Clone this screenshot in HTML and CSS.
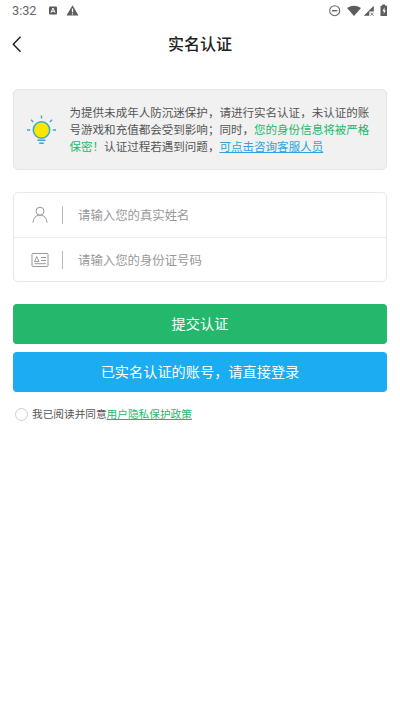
FILE: index.html
```
<!DOCTYPE html>
<html lang="zh-CN">
<head>
<meta charset="utf-8">
<meta name="viewport" content="width=device-width, initial-scale=1">
<title>实名认证</title>
<link rel="stylesheet" href="styles.css">
</head>
<body>
<header>
  <div class="status">
    <span class="time">3:32</span>
    <svg class="status-left" width="32" height="12" viewBox="0 0 32 12">
      <rect x="2" y="1.500" width="8" height="8" rx="1" fill="#5c5c5c"/>
      <path d="M4 7.700 6 3l2 4.700M4.700 6.300h2.600" fill="none" stroke="#fff" stroke-width="1"/>
      <path d="M25.500.3 31.500 10.500h-12z" fill="#5c5c5c"/>
      <path d="M25.500 3.500v3.700M25.500 8.200v1.300" stroke="#fff" stroke-width="1.200"/>
    </svg>
    <svg class="status-right" width="60" height="14" viewBox="0 0 60 14">
      <circle cx="5.700" cy="6.700" r="5" fill="none" stroke="#666" stroke-width="1.100"/>
      <path d="M3 6.700h5.400" stroke="#666" stroke-width="1.400"/>
      <path d="M18 4Q25 -.4 32 4L25 12z" fill="#5c5c5c"/>
      <path d="M44.800 1.800v5.700h-4.500v4.200h-5.500z" fill="#5c5c5c"/>
      <path d="m41.500 8.700 3 3m0-3-3 3" stroke="#777" stroke-width="1"/>
      <path d="M53.200.5h3v1.200H58V12h-6.500V1.700h1.700z" fill="#5c5c5c"/>
      <path d="m55.500 3.300-2 3.900h1.300v2.900l2-3.900h-1.300z" fill="#fff"/>
    </svg>
  </div>
  <div class="nav">
    <svg class="back" width="10" height="18" viewBox="0 0 10 18"><path d="M8.500 1.800 1.300 9.300l7.200 7.500" fill="none" stroke="#222" stroke-width="1.500"/></svg>
    <h1>实名认证</h1>
  </div>
</header>
<main>
  <section class="notice">
    <svg width="30" height="30" viewBox="0 0 30 30" fill="none" stroke="#35a9d6" stroke-width="1.400">
      <circle cx="14.500" cy="15" r="8.200" fill="#ffe600" stroke-width="1.500"/>
      <path d="M14.500.5v3M0 15h3.200M25.800 15h3.200M4 4.800l2.200 2.100M25 4.800l-2.200 2.100M10.500 25.300h8M12.200 28.300h4.600"/>
    </svg>
    <p>为提供未成年人防沉迷保护，请进行实名认证，未认证的账<br>号游戏和充值都会受到影响；同时，<span class="green">您的身份信息将被严格<br>保密！</span>认证过程若遇到问题，<a class="blue" href="#">可点击咨询客服人员</a></p>
  </section>
  <form>
    <div class="fields">
      <label>
        <svg width="18" height="18" viewBox="0 0 18 18" fill="none" stroke="#999"><circle cx="9" cy="5.200" r="4"/><path d="M2 16.700c.2-4.700 3-7.500 7-7.500s6.800 2.800 7 7.500"/></svg>
        <input type="text" placeholder="请输入您的真实姓名">
      </label>
      <label>
        <svg width="18" height="18" viewBox="0 0 18 18" fill="none" stroke="#999"><rect x="1" y="2.500" width="16" height="13" rx="1"/><path d="M3.500 10.500h4.500L5.700 5.500zM10 6.500h5M10 9.500h5M3.500 12.700h11.500"/></svg>
        <input type="text" placeholder="请输入您的身份证号码">
      </label>
    </div>
    <button class="submit" type="button">提交认证</button>
    <button class="login" type="button">已实名认证的账号，请直接登录</button>
    <div class="agree"><span class="radio"></span><span>我已阅读并同意<a class="green" href="#">用户隐私保护政策</a></span></div>
  </form>
</main>
</body>
</html>
```
FILE: styles.css
```
* { box-sizing: border-box; }
body {
  margin: 0;
  min-height: 710px;
  background: #fff;
  color: #555;
  font-family: "Noto Sans CJK SC", sans-serif;
}
.status {
  display: flex;
  align-items: center;
  height: 22px;
  padding: 0 11px 0 12px;
}
.time {
  width: 35px;
  color: #666;
  font: 12.7px/22px Roboto, sans-serif;
}
.status-right { margin-left: auto; }
.nav {
  display: grid;
  grid-template-columns: 10px 1fr 10px;
  align-items: center;
  height: 44px;
  padding: 0 12px;
}
h1 {
  margin: 0;
  color: #222;
  font-size: 16px;
  font-weight: 500;
  line-height: 42px;
  height: 44px;
  text-align: center;
}
main { padding: 23px 13px 0; }
.notice {
  display: flex;
  align-items: center;
  height: 81px;
  padding-left: 13px;
  border: 1px solid #e5e5e5;
  border-radius: 5px;
  background: #f1f1f1;
}
.notice p {
  margin: 0 0 0 12.5px;
  font-size: 11.54px;
  line-height: 17.2px;
  white-space: nowrap;
}
a { text-underline-offset: 1px; }
.green { color: #24b86c; }
.blue { color: #2ba4de; }
.fields {
  margin: 22px 0;
  border: 1px solid #e8e8e8;
  border-radius: 5px;
}
label {
  display: flex;
  align-items: center;
  height: 44px;
  padding-left: 17px;
}
label + label { border-top: 1px solid #eee; }
input {
  flex: 1;
  min-width: 0;
  height: 18px;
  margin-left: 13px;
  padding: 0 0 0 15px;
  border: 0;
  border-left: 1px solid #bbb;
  outline: 0;
  background: none;
  font: 12.4px/18px "Noto Sans CJK SC", sans-serif;
}
input::placeholder { color: #999; opacity: 1; }
button {
  display: block;
  width: 100%;
  height: 40px;
  padding: 0 0 2px;
  border: 0;
  border-radius: 4px;
  color: #fff;
  font: 14.2px/38px "Noto Sans CJK SC", sans-serif;
}
.submit { background: #24b86c; }
.login {
  margin-top: 8px;
  background: #1cacf2;
}
.agree {
  display: flex;
  align-items: center;
  height: 18px;
  margin-top: 13px;
  padding-left: 2px;
  font-size: 10.67px;
  line-height: 18px;
}
.radio {
  width: 13px;
  height: 13px;
  margin-right: 4px;
  border: 1px solid #ccc;
  border-radius: 50%;
}
```
